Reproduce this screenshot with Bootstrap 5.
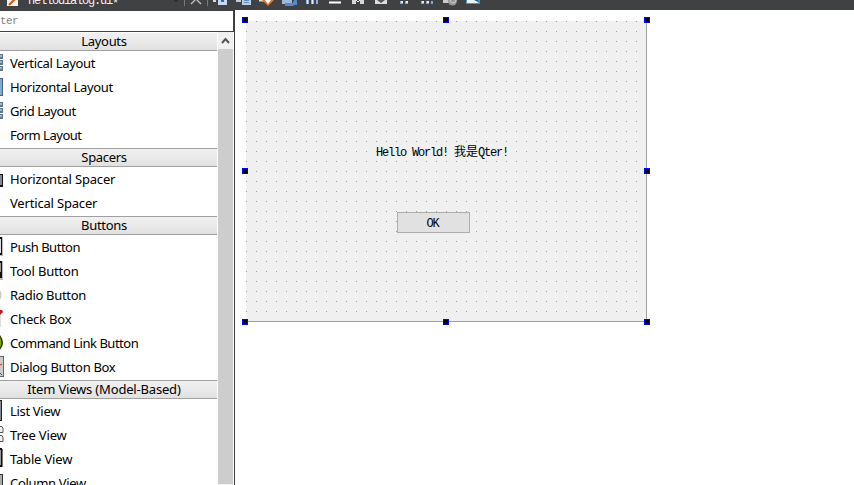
<!DOCTYPE html>
<html lang="en">
<head>
<meta charset="utf-8">
<title>Form designer</title>
<link rel="stylesheet" href="https://cdn.jsdelivr.net/npm/bootstrap@5.3.0/dist/css/bootstrap.min.css">
<style>
body{width:854px;height:485px;font-family:"Noto Sans","Noto Sans CJK SC",sans-serif;font-size:13px;color:#000;background:#fff}
.song{font-family:"Liberation Mono","Noto Sans CJK SC",monospace;font-size:12px;letter-spacing:-1.2px;line-height:14px;white-space:pre}
.song .han{font-size:12px;letter-spacing:0}
.toolstrip{height:10px;background:#404142}
.toolstrip svg{display:block}
.file-name{left:28px;top:-6px;color:#f0f0f0}
.modified{top:3px}
.palette{width:235px;background:#fff;border-right:1px solid #3a3b3c}
.filter{height:22px;border:solid #404142;border-width:1px 1px 1px 0;color:#858585}
.filter .song{line-height:20px;font-size:11px;letter-spacing:-.6px}
.entries{width:217px;letter-spacing:-.32px}
.narrow{letter-spacing:-.48px}
.wide{letter-spacing:-.18px}
.group-title{height:19px;line-height:17px;margin-top:1px;border:solid #a0a0a0;border-width:1px 0;background:linear-gradient(#f1f1f1,#e1e1e1);padding-right:9px}
.group-title:first-child{margin-top:0;border-top-color:#fff}
.entry{height:24px;line-height:25px}
.entry svg{width:10px;height:24px;flex:none}
.scroll{width:15px;margin-left:1px;background:#f0f0f0}
.thumb{background:#cdcdcd;margin-bottom:1px}
.arrow{height:17px}
.form-canvas{width:401px;height:301px;margin:11px 0 0 11px;border:solid #a0a0a0;border-width:0 1px 1px 0;background:#f0f0f0}
.handle{width:6px;height:6px;background:#000;border:1px solid #00f}
.hl{left:-4px}.hc{left:197px}.hr{left:398px}.vt{top:-4px}.vm{top:147px}.vb{top:298px}
.hello{left:130px;top:125px}
.ok-button{left:151px;top:191px;width:73px;height:21px;padding:2px 2px 0 0;background:#e1e1e1;border:1px solid #adadad}
</style>
<script src="https://cdn.jsdelivr.net/npm/bootstrap@5.3.0/dist/js/bootstrap.bundle.min.js"></script>
</head>
<body class="m-0 overflow-hidden d-flex flex-column">
<header class="toolstrip position-relative flex-shrink-0 overflow-hidden">
<svg width="854" height="10" viewBox="0 0 854 10">
<path fill="#f4f2ef" d="M7 0h11v6H7z"/><path stroke="#c86410" stroke-width="2.2" d="M9 5l6-6"/>
<path fill="#2b2b2b" d="M174 0h4l-2 2z"/>
<path stroke="#77797a" d="M184.500 0v6M207.500 0v6"/>
<path stroke="#c4c4c4" stroke-width="1.300" fill="none" d="M191 4l5-5 5 5"/>
<path fill="#c9d9ed" d="M213 0h3v2h-3zM218 0h9v5h-9z"/><path fill="#2e69b3" d="M221 0h3v2h-3z"/>
<path fill="#bdcde0" d="M236 0h5v2h-5zM242 0h9v5h-9z"/><path fill="#6389bd" d="M244 0h5v1h-5zM244 2h5v1h-5z"/>
<path fill="#ddd" d="M259 0h5v1.500h-5z"/><path fill="#e57728" d="M262 0h12l-6 6z"/><path fill="#fff" d="M265 0h6l-3 4z"/>
<path fill="#9eb9db" d="M282 0h10v4h-10z"/><path fill="#5588c8" d="M285 3h8v-2l3 2-3 3H285zM294 0h3v5h-3z"/>
<path fill="#90b4e1" d="M306 0h3v4h-3zM311 0h3v4h-3zM316 0h2v4h-2z"/><path fill="#e3edf9" d="M307 0h1v4h-1zM312 0h1v4h-1z"/>
<path fill="#7ea8dd" d="M329 1h12v3h-12z"/><path fill="#fff" d="M329 2h12v1h-12z"/>
<path fill="#d7d7d7" d="M352 0h4v4h-4zM360 0h4v4h-4z"/><path stroke="#eee" fill="none" d="M356 0l2 2 2-2"/>
<path fill="#ddd" d="M375 0h12v4h-12z"/><path fill="#555" d="M377 0h8l-4 3z"/>
<path fill="#79a7e0" d="M400 1h3v3h-3zM405 1h3v3h-3zM421 1h3v3h-3zM426 1h3v3h-3zM431 1h2v3h-2z"/><path fill="#e1ecfa" d="M401 1h2v2h-2zM406 1h2v2h-2zM422 1h2v2h-2zM427 1h2v2h-2z"/>
<path fill="#ccc" d="M443 0h7v3h-7z"/><circle cx="452.500" cy="1" r="4.500" fill="#969696"/><path stroke="#ccc" fill="none" d="M450 0q0 3 3 3t3-3"/>
<path fill="#4b91c6" d="M466 0h14v4h-14z"/><path fill="#edf3f5" d="M467 0h11v3h-11z"/><path fill="#16608c" d="M474 0h4v2z"/>
</svg>
<div class="file-name song position-absolute">hellodialog.ui<span class="modified position-relative">*</span></div>
</header>
<main class="d-flex flex-grow-1 overflow-hidden">
<aside class="palette d-flex flex-column flex-shrink-0">
<div class="filter flex-shrink-0"><div class="song">ter</div></div>
<div class="d-flex flex-grow-1 overflow-hidden">
<div class="entries text-nowrap">
<div class="group-title text-center">Layouts</div>
<div class="entry d-flex"><svg><path fill="#5f7689" d="M0 3h3v5H0zM0 9h3v5H0zM0 15h3v5H0z"/><path fill="#9fb8ce" d="M0 4h2v2H0zM0 10h2v2H0zM0 16h2v2H0z"/></svg><span>Vertical Layout</span></div>
<div class="entry d-flex"><svg><path fill="#46617d" d="M0 3h3v18H0z"/><path fill="#88a9c7" d="M0 4h2v16H0z"/></svg><span>Horizontal Layout</span></div>
<div class="entry d-flex narrow"><svg><path fill="#5f7689" d="M0 3h3v5H0zM0 9h3v5H0zM0 15h3v5H0z"/><path fill="#9fb8ce" d="M0 4h2v2H0zM0 10h2v2H0zM0 16h2v2H0z"/></svg><span>Grid Layout</span></div>
<div class="entry d-flex narrow"><svg></svg><span>Form Layout</span></div>
<div class="group-title text-center">Spacers</div>
<div class="entry d-flex wide"><svg><path fill="#111" d="M0 7h3v13H0z"/><path fill="#888" d="M0 8h2v10H0z"/></svg><span>Horizontal Spacer</span></div>
<div class="entry d-flex wide"><svg></svg><span>Vertical Spacer</span></div>
<div class="group-title text-center">Buttons</div>
<div class="entry d-flex narrow"><svg><path fill="#bbb" d="M0 2h3v19H0z"/><path fill="#111" d="M0 2h2v18H0z"/><path fill="#ddd" d="M0 4h1v14H0z"/></svg><span>Push Button</span></div>
<div class="entry d-flex wide"><svg><path fill="#bbb" d="M0 2h3v19H0z"/><path fill="#111" d="M0 2h2v17H0z"/><path fill="#999" d="M0 4h1v9H0z"/></svg><span>Tool Button</span></div>
<div class="entry d-flex"><svg><path fill="#ccc" d="M0 7q3 5 0 10z"/></svg><span>Radio Button</span></div>
<div class="entry d-flex wide"><svg><path fill="#ddd" d="M0 7h1v13H0z"/><path fill="#c41717" d="M0 3h2l1 2-3 3z"/></svg><span>Check Box</span></div>
<div class="entry d-flex narrow"><svg><path fill="#223000" d="M0 4q6 8 0 15z"/><path fill="#829c1b" d="M0 6q3 6 0 11z"/></svg><span>Command Link Button</span></div>
<div class="entry d-flex"><svg><path fill="#666" d="M0 1h4v21H0z"/><path fill="#ccc" d="M0 2h3v19H0z"/><path stroke="#d22" d="M0 10l2-1M0 18l2 2"/></svg><span>Dialog Button Box</span></div>
<div class="group-title text-center wide">Item Views (Model-Based)</div>
<div class="entry d-flex"><svg><path fill="#222" d="M0 1h2v21H0z"/><path fill="#888" d="M0 2h1v19H0z"/></svg><span>List View</span></div>
<div class="entry d-flex wide"><svg><path fill="#eee" stroke="#555" d="M-1 3.500h3l1 2v4h-4zM-1 12.500h3l1 2v4h-4z"/></svg><span>Tree View</span></div>
<div class="entry d-flex wide"><svg><path fill="#111" d="M0 1h2v19H0z"/><path fill="#777" d="M2 2h1v18H2z"/><path fill="#999" d="M0 3h1v15H0z"/></svg><span>Table View</span></div>
<div class="entry d-flex"><svg><path fill="#333" d="M0 3h3v20H0z"/><path fill="#aaa" d="M0 4h2v18H0z"/></svg><span>Column View</span></div>
</div>
<div class="scroll d-flex flex-column"><svg class="arrow flex-shrink-0" width="15" height="17"><path d="M4 11l3.500-4 3.500 4" fill="none" stroke="#555" stroke-width="2"/></svg><div class="thumb flex-grow-1"></div></div>
</div>
</aside>
<section class="flex-grow-1 bg-white">
<div class="form-canvas position-relative">
<svg class="d-block" width="400" height="300"><defs><pattern id="grid" width="10" height="10" patternUnits="userSpaceOnUse"><path fill="#a0a0a0" d="M0 0h1v1H0z"/></pattern></defs><path fill="url(#grid)" d="M0 0h400v300H0z"/></svg>
<div class="hello song position-absolute">Hello World! <span class="han">我是</span>Qter!</div>
<div class="ok-button song position-absolute d-flex align-items-center justify-content-center">OK</div>
<i class="handle position-absolute hl vt"></i><i class="handle position-absolute hc vt"></i><i class="handle position-absolute hr vt"></i>
<i class="handle position-absolute hl vm"></i><i class="handle position-absolute hr vm"></i>
<i class="handle position-absolute hl vb"></i><i class="handle position-absolute hc vb"></i><i class="handle position-absolute hr vb"></i>
</div>
</section>
</main>
</body>
</html>
